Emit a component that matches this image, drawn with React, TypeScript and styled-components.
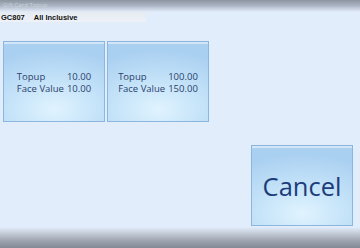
import React from 'react';
import styled, { createGlobalStyle } from 'styled-components';

const GlobalStyle = createGlobalStyle`
  html, body {
    margin: 0;
    padding: 0;
    background: #e2edfc;
  }
  * {
    box-sizing: border-box;
  }
`;

// Window frame
const Window = styled.div`
  width: 360px;
  height: 248px;
  display: flex;
  flex-direction: column;
  background: #e2edfc;
  font-family: "Open Sans", "Liberation Sans", sans-serif;
  overflow: hidden;
`;

const TitleBar = styled.div`
  height: 12px;
  padding: 1px 0 0 3px;
  background: linear-gradient(to bottom, #8d95a2 0%, #a9b2c0 45%, #cfd8e6 80%, #e2edfc 100%);
  color: #c9d1de;
  font-size: 6px;
  line-height: 8px;
`;

const InfoStrip = styled.div`
  width: 146px;
  height: 10px;
  display: flex;
  align-items: center;
  gap: 9px;
  padding-left: 1px;
  background: linear-gradient(to bottom, #e6ebf2 0%, #eef2f7 100%);
  font-family: "Liberation Sans", Arial, sans-serif;
  font-weight: bold;
  font-size: 7.5px;
  color: #111;
`;

const Body = styled.div`
  flex: 1;
  display: flex;
  flex-direction: column;
`;

const ButtonRow = styled.div`
  display: flex;
  gap: 2px;
  padding: 19px 0 0 3px;
`;

const TileButton = styled.button`
  width: 102px;
  height: 81px;
  padding: 0;
  border: 1px solid #8db6df;
  box-shadow: inset 0 2px 0 #d3e6f7;
  background: radial-gradient(ellipse 95% 75% at 50% 85%, #e0f3fe 0%, #c6e4f9 45%, #aad0f1 100%);
  display: flex;
  align-items: center;
  justify-content: center;
  font-family: "Open Sans", "Liberation Sans", sans-serif;
  color: #2b3f6d;
  cursor: pointer;
`;

const Details = styled.div`
  display: grid;
  grid-template-columns: auto auto;
  column-gap: 3px;
  font-size: 9.5px;
  line-height: 11.5px;
  margin-top: 2px;
`;

const Label = styled.span`
  text-align: left;
`;

const Amount = styled.span`
  text-align: right;
`;

const CancelRow = styled.div`
  display: flex;
  justify-content: flex-end;
  padding: 23px 7px 0 0;
`;

const CancelButton = styled(TileButton)`
  font-size: 25.5px;
  color: #1d3c7b;
`;

const StatusBar = styled.div`
  height: 21px;
  background: linear-gradient(to bottom, #e2edfc 0%, #c4ccd7 30%, #9ea5b0 65%, #848a95 100%);
`;

const offers = [
  { topup: '10.00', face: '10.00' },
  { topup: '100.00', face: '150.00' },
];

const App: React.FC = () => {
  return (
    <>
      <GlobalStyle />
      <Window>
        <TitleBar>Gift Card Topup</TitleBar>
        <InfoStrip>
          <span>GC807</span>
          <span>All Inclusive</span>
        </InfoStrip>
        <Body>
          <ButtonRow>
            {offers.map((o) => (
              <TileButton key={o.topup}>
                <Details>
                  <Label>Topup</Label>
                  <Amount>{o.topup}</Amount>
                  <Label>Face Value</Label>
                  <Amount>{o.face}</Amount>
                </Details>
              </TileButton>
            ))}
          </ButtonRow>
          <CancelRow>
            <CancelButton>Cancel</CancelButton>
          </CancelRow>
        </Body>
        <StatusBar />
      </Window>
    </>
  );
};

export default App;
